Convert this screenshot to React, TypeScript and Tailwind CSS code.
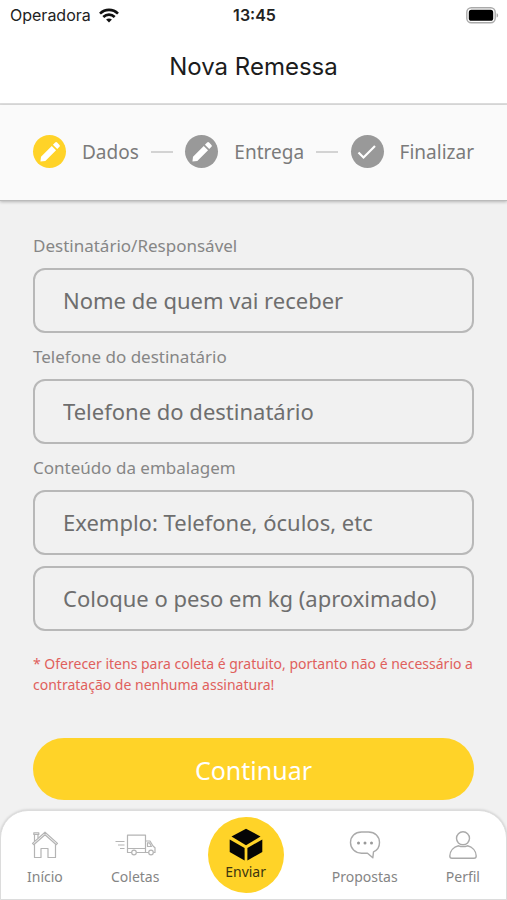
import { useState } from "react";
import type { ReactNode } from "react";

function PencilIcon() {
  return (
    <svg viewBox="0 0 24 24" className="size-7" fill="#fff" aria-hidden="true">
      <path d="M4.300 16 3.800 20.200 8 19.700 17.200 10.500 13.500 6.800zM14.500 5.800l3.700 3.700 1.900-1.900a1.200 1.200 0 0 0 0-1.700l-2-2a1.200 1.200 0 0 0-1.700 0z" />
    </svg>
  );
}

function CheckIcon() {
  return (
    <svg viewBox="0 0 24 24" className="size-6" fill="none" stroke="#fff" strokeWidth="2.200" aria-hidden="true">
      <path d="M3.500 12.500l5 5L20 6" />
    </svg>
  );
}

function WifiIcon() {
  return (
    <svg viewBox="0 0 20 15" className="h-[15px] w-5" fill="none" stroke="#111" strokeWidth="2.6" aria-hidden="true">
      <path d="M1 5.6C6 .6 14 .6 19 5.6" />
      <path d="M4.3 9C7.6 5.8 12.4 5.8 15.7 9" />
      <path d="M10 14.6l-2.9-3c1.7-1.5 4.1-1.5 5.8 0z" fill="#111" stroke="none" />
    </svg>
  );
}

function BatteryIcon() {
  return (
    <svg viewBox="0 0 33 17" className="h-[17px] w-[33px]" aria-hidden="true">
      <rect x="0.8" y="0.8" width="28.4" height="15" rx="4.5" fill="#fff" stroke="#aaa" strokeWidth="1.4" />
      <rect x="2.8" y="2.8" width="24.4" height="11" rx="2.6" fill="#000" />
      <path d="M30.6 6.2c2 .5 2 3.700 0 4.200z" fill="#aaa" />
    </svg>
  );
}

function HouseIcon() {
  return (
    <svg viewBox="0 0 28 28" className="size-7" fill="none" stroke="#b4b4b4" strokeWidth="1.200" strokeLinejoin="round" aria-hidden="true">
      <path d="M1.500 12.400 14 1.200l12.500 11.200-1.200 1.300L14 3.700 2.700 13.700z" />
      <path d="M3.500 13.300V26.500H10V17.500h7v9h7.500V13.300" />
      <path d="M3.500 10V3.500H7V7M2.800 1.800h5v1.700h-5z" />
    </svg>
  );
}

function TruckIcon() {
  return (
    <svg viewBox="0 0 42 22" className="h-[22px] w-[42px]" fill="none" stroke="#b4b4b4" strokeWidth="1.200" strokeLinejoin="round" aria-hidden="true">
      <path d="M1.500 7.500h9M4 11h6.500M6 14.500h4.500" />
      <path d="M18 18.500h-4.500V1.200h18v17.300h-9M13.500 14.500h18" />
      <path d="M31.500 7h4.500l3 5 2 1.800v4.700h-1.500M34.500 18.500h-3M33.500 8.800h1.900l2 3.700h-3.900z" />
      <circle cx="20" cy="18.500" r="2.300" />
      <circle cx="37" cy="18.500" r="2.300" />
    </svg>
  );
}

function BoxIcon() {
  return (
    <svg viewBox="0 0 34 34" className="size-[34px]" fill="#050505" aria-hidden="true">
      <path d="M17 .8 31.500 8.500 17 17.300 2.500 8.500z" />
      <path d="M.7 11.500 15.600 20v12.500L.7 24z" />
      <path d="M33.300 11.500 18.400 20v12.500l14.900-8.500z" />
    </svg>
  );
}

function ChatIcon() {
  return (
    <svg viewBox="0 0 32 28" className="h-7 w-8" fill="none" stroke="#aaa" strokeWidth="1.400" strokeLinejoin="round" aria-hidden="true">
      <path d="M12.500 1h7C26 1 30.500 5.500 30.500 11.500c0 4.300-2.300 7.800-6 9.300l-.7 6-5.300-4.600h-6C6 22.200 1.500 17.500 1.500 11.500S6 1 12.500 1z" />
      <g fill="#999" stroke="none">
        <circle cx="9.500" cy="12" r="1.500" />
        <circle cx="16" cy="12" r="1.500" />
        <circle cx="22.500" cy="12" r="1.500" />
      </g>
    </svg>
  );
}

function PersonIcon() {
  return (
    <svg viewBox="0 0 28 28" className="size-7" fill="none" stroke="#aaa" strokeWidth="1.400" strokeLinejoin="round" aria-hidden="true">
      <circle cx="14" cy="7.300" r="6.500" />
      <path d="M9.500 14.800C4.500 16 1 20 .8 25c0 1.500.7 2.200 2.200 2.200h22c1.500 0 2.200-.7 2.200-2.200-.2-5-3.700-9-8.700-10.200-2.600 1-6.400 1-9 0z" />
    </svg>
  );
}

function Step({ label, active, children }: { label: string; active?: boolean; children: ReactNode }) {
  return (
    <li className="flex items-center gap-4" aria-current={active ? "step" : undefined}>
      <span className={`flex size-[33px] items-center justify-center rounded-full ${active ? "bg-[#ffd328]" : "bg-[#999]"}`}>
        {children}
      </span>
      <span className="pt-[2px] text-[19px] text-[#7b7b7b]">{label}</span>
    </li>
  );
}

function StepLine() {
  return <li aria-hidden="true" className="h-[2px] w-[22px] bg-[#d3d3d3]" />;
}

const inputClass =
  "h-[65px] w-full rounded-xl border-2 border-[#b8b8b8] bg-transparent px-7 pb-[2px] text-[22px] text-[#666] outline-none placeholder:text-[#6e6e6e] placeholder:opacity-100";

function Field({ id, label, placeholder, type = "text" }: { id: string; label: string; placeholder: string; type?: string }) {
  return (
    <div className="flex flex-col gap-3">
      <label htmlFor={id} className="text-[17px] leading-5 text-[#868686]">
        {label}
      </label>
      <input id={id} type={type} placeholder={placeholder} className={inputClass} />
    </div>
  );
}

function NavItem({ label, children }: { label: string; children: ReactNode }) {
  return (
    <a href="#" className="flex flex-col items-center gap-2 pt-2 text-sm leading-5 text-[#858585]">
      <span className="flex h-7 items-center">{children}</span>
      {label}
    </a>
  );
}

export default function App() {
  const [sent, setSent] = useState(false);
  return (
    <div className="flex min-h-screen flex-col bg-[#f1f1f1] font-['Noto_Sans','Open_Sans',sans-serif]">
      <div className="grid h-[30px] grid-cols-3 items-center bg-white pr-2 pl-[10px] font-['Inter',sans-serif] text-base text-[#222]">
        <span className="flex items-center gap-2">
          Operadora <WifiIcon />
        </span>
        <span className="text-center font-semibold">13:45</span>
        <span className="justify-self-end">
          <BatteryIcon />
        </span>
      </div>
      <header className="flex h-[75px] items-center justify-center border-b-2 border-[#dedede] bg-white">
        <h1 className="font-['Inter',sans-serif] text-2xl text-[#1c1c1c]">Nova Remessa</h1>
      </header>
      <ol className="flex h-24 items-center justify-between border-b border-[#bbb] bg-[#fafafa] px-[33px] pb-[2px] shadow-[0_1px_3px_rgba(0,0,0,0.25)]">
        <Step label="Dados" active>
          <PencilIcon />
        </Step>
        <StepLine />
        <Step label="Entrega">
          <PencilIcon />
        </Step>
        <StepLine />
        <Step label="Finalizar">
          <CheckIcon />
        </Step>
      </ol>
      <main className="flex-1 px-[33px] pt-[35px] pb-[10px]">
        <form
          onSubmit={(event) => {
            event.preventDefault();
            setSent(true);
          }}
        >
          <div className="flex flex-col gap-[14px]">
            <Field id="nome" label="Destinatário/Responsável" placeholder="Nome de quem vai receber" />
            <Field id="telefone" label="Telefone do destinatário" placeholder="Telefone do destinatário" type="tel" />
            <Field id="conteudo" label="Conteúdo da embalagem" placeholder="Exemplo: Telefone, óculos, etc" />
          </div>
          <input
            aria-label="Peso em kg"
            inputMode="decimal"
            placeholder="Coloque o peso em kg (aproximado)"
            className={`mt-[11px] ${inputClass}`}
          />
          <p className="mt-[22px] text-sm leading-[21px] text-[#e0605c]">
            * Oferecer itens para coleta é gratuito, portanto não é necessário a contratação de nenhuma assinatura!
          </p>
          <button
            type="submit"
            disabled={sent}
            className="mt-[43px] h-[62px] w-full rounded-full bg-[#ffd328] pt-[3px] text-[25px] text-white"
          >
            Continuar
          </button>
        </form>
      </main>
      <nav className="flex h-[90px] items-center justify-between rounded-t-[28px] border border-[#dcdcdc] bg-white px-[26px] shadow-[0_0_3px_rgba(0,0,0,0.2)]">
        <NavItem label="Início">
          <HouseIcon />
        </NavItem>
        <NavItem label="Coletas">
          <TruckIcon />
        </NavItem>
        <a href="#" aria-current="page" className="flex size-[76px] flex-col items-center justify-center rounded-full bg-[#ffd328] text-sm leading-5 text-[#3d3510]">
          <BoxIcon />
          Enviar
        </a>
        <NavItem label="Propostas">
          <ChatIcon />
        </NavItem>
        <NavItem label="Perfil">
          <PersonIcon />
        </NavItem>
      </nav>
    </div>
  );
}
